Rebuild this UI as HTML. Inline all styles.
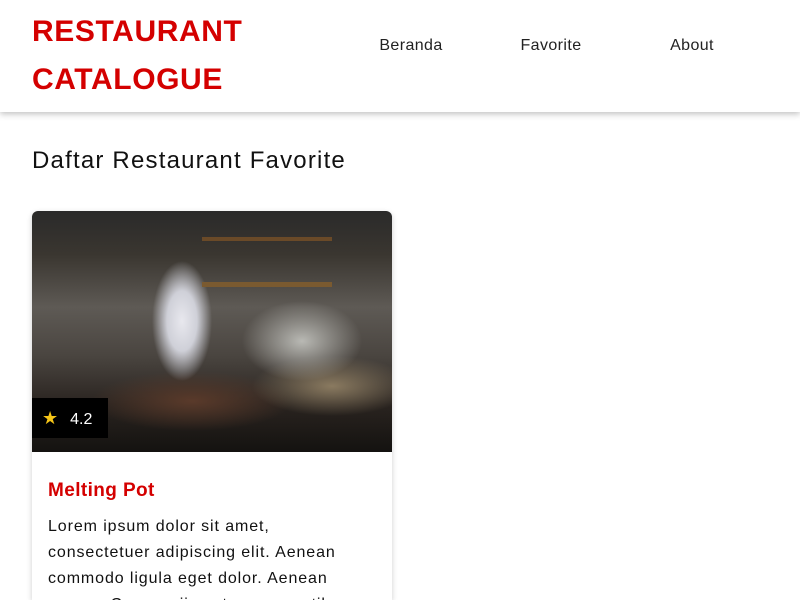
<!DOCTYPE html>
<html><head><meta charset="utf-8"><style>
*{margin:0;padding:0;box-sizing:border-box}
html,body{width:800px;height:600px;overflow:hidden}
body{background:#fff;font-family:"Liberation Sans",sans-serif;color:#111}
header{height:112px;box-shadow:0 2px 6px rgba(0,0,0,.25);position:relative;background:#fff}
.logo{position:absolute;left:32px;top:8px;color:#d40000;font-weight:bold;font-size:30px;line-height:48px;letter-spacing:.6px}
nav a{position:absolute;top:37px;font-size:16px;color:#222;text-decoration:none;transform:translateX(-50%);letter-spacing:.4px}
h2{position:absolute;left:32px;top:147px;font-weight:normal;font-size:24px;color:#111;letter-spacing:1.2px}
.card{position:absolute;left:32px;top:211px;width:360px;height:389px;border-radius:6px 6px 0 0;overflow:hidden;box-shadow:0 2px 6px rgba(0,0,0,.2)}
.img{height:241px;position:relative;background:
radial-gradient(ellipse 30px 60px at 150px 110px,#e8e8ee 0,#cfd0d8 50%,transparent 100%),
radial-gradient(ellipse 60px 40px at 270px 130px,#b9b9b4 0,transparent 100%),
radial-gradient(ellipse 80px 30px at 300px 175px,#8a7a60 0,transparent 100%),
radial-gradient(ellipse 100px 30px at 160px 190px,#5a3a2a 0,transparent 100%),
linear-gradient(180deg,#2a2a2a 0,#3a3630 18%,#5e5a55 40%,#4a4540 60%,#2a2420 80%,#141210 100%)}
.shelf{position:absolute;left:170px;top:26px;width:130px;height:50px;border-bottom:5px solid #7a5a30;border-top:4px solid #6a4a28}
.rate{position:absolute;left:0;top:187px;width:76px;height:40px;background:#000;color:#fff;font-size:16px;line-height:40px;padding-left:10px}
.rate span{color:#f5c518;margin-right:12px;font-size:18px}
.body{padding:28px 16px;background:#fff}
.body h3{color:#d40000;font-size:19px;font-weight:bold;margin-bottom:12px;letter-spacing:.4px}
.body p{font-size:16px;line-height:26px;color:#111;letter-spacing:.9px}
</style></head><body>
<header><div class="logo">RESTAURANT<br>CATALOGUE</div>
<nav><a style="left:411px">Beranda</a><a style="left:551px">Favorite</a><a style="left:692px">About</a></nav></header>
<h2>Daftar Restaurant Favorite</h2>
<div class="card"><div class="img"><div class="shelf"></div><div class="rate"><span>★</span>4.2</div></div>
<div class="body"><h3>Melting Pot</h3><p>Lorem ipsum dolor sit amet, consectetuer adipiscing elit. Aenean commodo ligula eget dolor. Aenean massa. Cum sociis natoque penatibus</p></div></div>
</body></html>
